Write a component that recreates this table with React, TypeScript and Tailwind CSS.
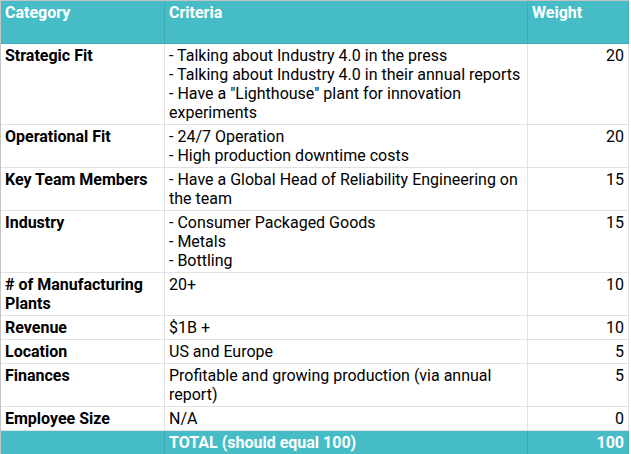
type Row = {
  category: string;
  criteria: string[];
  weight: number;
  height: string;
};

const rows: Row[] = [
  {
    category: "Strategic Fit",
    criteria: [
      "- Talking about Industry 4.0 in the press",
      "- Talking about Industry 4.0 in their annual reports",
      '- Have a "Lighthouse" plant for innovation experiments',
    ],
    weight: 20,
    height: "h-[81px]",
  },
  {
    category: "Operational Fit",
    criteria: ["- 24/7 Operation", "- High production downtime costs"],
    weight: 20,
    height: "h-[43px]",
  },
  {
    category: "Key Team Members",
    criteria: ["- Have a Global Head of Reliability Engineering on the team"],
    weight: 15,
    height: "h-[43px]",
  },
  {
    category: "Industry",
    criteria: ["- Consumer Packaged Goods", "- Metals", "- Bottling"],
    weight: 15,
    height: "h-[62px]",
  },
  {
    category: "# of Manufacturing Plants",
    criteria: ["20+"],
    weight: 10,
    height: "h-[43px]",
  },
  { category: "Revenue", criteria: ["$1B +"], weight: 10, height: "h-[24px]" },
  { category: "Location", criteria: ["US and Europe"], weight: 5, height: "h-[24px]" },
  {
    category: "Finances",
    criteria: ["Profitable and growing production (via annual report)"],
    weight: 5,
    height: "h-[43px]",
  },
  { category: "Employee Size", criteria: ["N/A"], weight: 0, height: "h-[24px]" },
];

export default function App() {
  return (
    <div className="w-[631px] h-[454px] overflow-hidden bg-white font-['Roboto',sans-serif] text-[16px] leading-[19px] text-black">
      <div className="grid w-[629px] grid-cols-[164px_363px_101px] border-t border-l border-[#c4c4c4]">
        {/* header */}
        <div className="h-[43px] bg-[#46bdc6] border-r border-b border-[#3fabb3] pl-[4px] pt-[2px] font-bold text-white">
          Category
        </div>
        <div className="h-[43px] bg-[#46bdc6] border-r border-b border-[#3fabb3] pl-[4px] pt-[2px] font-bold text-white">
          Criteria
        </div>
        <div className="h-[43px] bg-[#46bdc6] border-r border-b border-[#3fabb3] pl-[4px] pt-[2px] font-bold text-white">
          Weight
        </div>

        {rows.map((row) => (
          <div key={row.category} className="contents">
            <div
              className={`${row.height} border-r border-b border-[#e2e2e2] pl-[4px] pr-[4px] pt-[2px] font-bold`}
            >
              {row.category}
            </div>
            <div
              className={`${row.height} border-r border-b border-[#e2e2e2] pl-[4px] pr-[4px] pt-[2px]`}
            >
              {row.criteria.map((line) => (
                <div key={line}>{line}</div>
              ))}
            </div>
            <div
              className={`${row.height} border-r border-b border-[#e2e2e2] pr-[4px] pt-[2px] text-right`}
            >
              {row.weight}
            </div>
          </div>
        ))}

        {/* total */}
        <div className="h-[24px] bg-[#46bdc6] border-r border-[#3fabb3]" />
        <div className="h-[24px] bg-[#46bdc6] border-r border-[#3fabb3] pl-[4px] pt-[2px] font-bold text-white">
          TOTAL (should equal 100)
        </div>
        <div className="h-[24px] bg-[#46bdc6] border-r border-[#3fabb3] pr-[4px] pt-[2px] text-right font-bold text-white">
          100
        </div>
      </div>
    </div>
  );
}
